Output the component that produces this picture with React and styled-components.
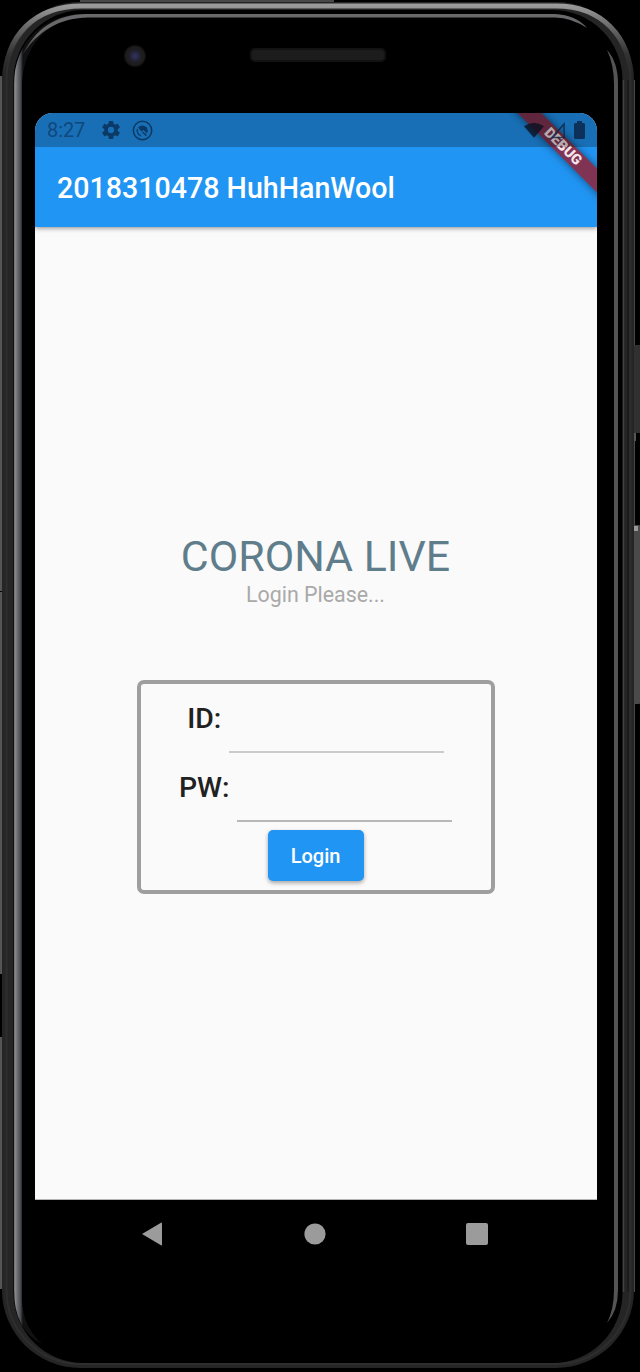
import React from 'react';
import styled, { createGlobalStyle } from 'styled-components';

const GlobalStyle = createGlobalStyle`
  * { box-sizing: border-box; }
  html, body { margin: 0; padding: 0; background: #000; }
  body { font-family: Roboto, "Noto Sans", sans-serif; overflow: hidden; }
`;

const Device = styled.div`
  position: relative;
  width: 640px;
  height: 1372px;
  padding: 0 43px 0 35px;
  display: flex;
  flex-direction: column;
  background: #000;
`;

const Frame = styled.svg`
  position: absolute;
  inset: 0;
  pointer-events: none;
`;

const Forehead = styled.div`
  position: relative;
  flex: none;
  height: 113px;
  display: flex;
  align-items: flex-start;
  padding: 45px 0 0 89px;
`;

const Camera = styled.div`
  width: 22px;
  height: 22px;
  border-radius: 50%;
  background: radial-gradient(circle, #34345c 0, #252542 4px, #1f1f24 6px, #1d1d1d 9px, #0c0c0c 11px);
`;

const Speaker = styled.div`
  width: 136px;
  height: 14px;
  margin: 3px 0 0 104px;
  border-radius: 5px;
  background: #1c1c1c;
  border: 2px solid #121212;
`;

const Screen = styled.main`
  position: relative;
  flex: none;
  height: 1087px;
  display: flex;
  flex-direction: column;
  background: #fafafa;
  border-radius: 18px 18px 0 0;
  border-bottom: 1px solid #b5b5b5;
  overflow: hidden;
`;

const StatusBar = styled.div`
  position: relative;
  z-index: 3;
  height: 34px;
  flex: none;
  display: flex;
  align-items: center;
  padding: 0 12px 0 12px;
  background: rgba(0, 0, 0, 0.25);
  color: #0c3a66;
`;

const Clock = styled.span`
  width: 55px;
  font-size: 20px;
  line-height: 34px;
  letter-spacing: -0.1px;
  color: #10477c;
`;

const StatusIcon = styled.svg`
  display: block;
  flex: none;
  margin-left: ${(p) => p.$gap || 0}px;
`;

const Spacer = styled.div`
  flex: 1;
`;

const AppBar = styled.header`
  position: relative;
  height: 114px;
  margin-top: -34px;
  flex: none;
  display: flex;
  align-items: center;
  padding: 36px 0 0 22px;
  background: #2195f3;
  box-shadow: 0 1px 5px rgba(0, 0, 0, 0.45);
`;

const Title = styled.h1`
  margin: 0;
  font-size: 28.6px;
  font-weight: 500;
  line-height: 34px;
  white-space: nowrap;
  color: #fff;
`;

const DebugRibbon = styled.div`
  position: absolute;
  z-index: 2;
  top: 24.5px;
  right: -30.5px;
  width: 130px;
  height: 17px;
  transform: rotate(45deg);
  background: rgba(142, 38, 60, 0.88);
  box-shadow: 0 0 8px rgba(0, 0, 0, 0.5);
  color: #f3e6ea;
  font-size: 14.4px;
  font-weight: 900;
  line-height: 17px;
  text-align: center;
`;

const Body = styled.section`
  flex: 1;
  display: flex;
  flex-direction: column;
  align-items: center;
  padding: 304px 1px 0 0;
`;

const Heading = styled.h2`
  margin: 0;
  font-size: 42.9px;
  font-weight: 400;
  line-height: 50px;
  white-space: nowrap;
  color: #607d8b;
`;

const Subtitle = styled.p`
  margin: 1px 0 0;
  font-size: 21.4px;
  line-height: 25px;
  color: #a9a9a9;
`;

const LoginCard = styled.form`
  width: 358px;
  height: 214px;
  margin-top: 73px;
  border: 4px solid #9e9e9e;
  border-radius: 7px;
  display: flex;
  flex-direction: column;
  align-items: center;
`;

const FieldRow = styled.label`
  height: 69px;
  flex: none;
  display: flex;
  align-items: center;
  gap: 7.5px;
`;

const FieldLabel = styled.span`
  font-size: 28.4px;
  font-weight: 500;
  line-height: 34px;
  color: #212121;
`;

const FieldInput = styled.input`
  width: 215px;
  height: 69px;
  padding: 0;
  border: 0;
  border-bottom: 2px solid ${(p) => p.$line};
  background: transparent;
  outline: none;
`;

const LoginButton = styled.button`
  width: 96px;
  height: 51px;
  margin-top: 8px;
  padding: 1px 0 0;
  border: 0;
  border-radius: 5px;
  background: #2195f3;
  box-shadow: 0 2px 4px rgba(0, 0, 0, 0.35);
  color: #fff;
  font: 500 20px/50px Roboto, sans-serif;
`;

const NavBar = styled.nav`
  position: relative;
  flex: none;
  height: 68px;
  display: flex;
  justify-content: space-between;
  align-items: center;
  padding: 0 109px 0 106px;
`;

function PhoneFrame() {
  return (
    <Frame width="640" height="1372" viewBox="0 0 640 1372" fill="none">
      <defs>
        <linearGradient id="topEdge" x1="0" y1="2" x2="0" y2="76" gradientUnits="userSpaceOnUse">
          <stop offset="0" stopColor="#a2a2a2" />
          <stop offset=".25" stopColor="#777" />
          <stop offset=".7" stopColor="#333" />
          <stop offset="1" stopColor="#2b2b2b" stopOpacity="0" />
        </linearGradient>
        <linearGradient id="leftRim" x1="13" y1="0" x2="23" y2="0" gradientUnits="userSpaceOnUse">
          <stop offset="0" stopColor="#333" />
          <stop offset=".2" stopColor="#8c8c8c" />
          <stop offset=".45" stopColor="#6c6c70" />
          <stop offset=".75" stopColor="#484a52" />
          <stop offset="1" stopColor="#111" />
        </linearGradient>
        <linearGradient id="topRim" x1="14" y1="0" x2="90" y2="0" gradientUnits="userSpaceOnUse">
          <stop offset="0" stopColor="#69696b" stopOpacity="0" />
          <stop offset=".3" stopColor="#69696b" />
        </linearGradient>
      </defs>
      <path d="M0 76h2v515H0zM0 592h2v382H0zM0 1037h2v252H0z" fill="#555" />
      <path d="M80 0h254v2H80z" fill="#48484a" />
      <path d="M634.5 80v1212" stroke="#48484a" />
      <rect x="634" y="345" width="6" height="88" fill="#303030" />
      <rect x="634" y="433" width="2" height="8" fill="#555" />
      <rect x="634" y="525" width="6" height="179" rx="1" fill="#4a4a4a" />
      <rect x="634" y="526" width="4" height="5" fill="#999" />
      <rect x="2" y="2" width="632" height="1366" rx="78" fill="#252525" />
      <rect x="6.5" y="6" width="624" height="1358" rx="74" stroke="#2e2e2e" strokeWidth="2" />
      <rect x="13.5" y="10" width="609" height="1353" rx="70" fill="#000" />
      <path d="M5 82C5 35 35 6 82 6H556C601 6 631 36 631 82" stroke="url(#topEdge)" strokeWidth="5" />
      <path d="M14 85C14 42 43 14 85 14L86 17.5C48 18 22 46 22 88V1300Q23 1327 42 1344Q14 1330 14 1290Z" fill="url(#leftRim)" />
      <path d="M22 56C34 30 56 14 86 14H555Q576 15 587 28Q572 18 555 17.500H88C60 18 38 30 22 56Z" fill="url(#topRim)" />
      <path d="M607 50Q618 62 618 84V1290Q618 1311 607 1323Q614 1309 614 1290V84Q614 65 607 50Z" fill="#545456" />
      <path d="M623.5 80V1292" stroke="#414141" strokeWidth="1.5" />
      <path d="M628 80V1292" stroke="#1c1c1c" strokeWidth="2" />
    </Frame>
  );
}

function SettingsIcon() {
  return (
    <StatusIcon width="18" height="18" viewBox="2 2 20 20" fill="currentColor">
      <path d="M19.43 12.98c.04-.32.07-.64.07-.98s-.03-.66-.07-.98l2.11-1.65a.5.5 0 0 0 .12-.64l-2-3.46a.5.5 0 0 0-.61-.22l-2.49 1a7.3 7.3 0 0 0-1.69-.98l-.38-2.65A.49.49 0 0 0 14 2h-4a.49.49 0 0 0-.49.42l-.38 2.65c-.61.25-1.17.59-1.69.98l-2.49-1a.49.49 0 0 0-.61.22l-2 3.46a.49.49 0 0 0 .12.64l2.11 1.65c-.04.32-.07.65-.07.98s.03.66.07.98l-2.11 1.65a.5.5 0 0 0-.12.64l2 3.46c.12.22.39.3.61.22l2.49-1c.52.4 1.08.73 1.69.98l.38 2.65c.03.24.24.42.49.42h4c.25 0 .46-.18.49-.42l.38-2.65a7.3 7.3 0 0 0 1.69-.98l2.49 1c.23.09.49 0 .61-.22l2-3.46a.5.5 0 0 0-.12-.64zM12 15.5a3.5 3.5 0 1 1 0-7 3.500 3.500 0 0 1 0 7z" />
    </StatusIcon>
  );
}

function SilencedIcon() {
  return (
    <StatusIcon $gap={12} width="21" height="21" viewBox="0 0 21 21" fill="none" stroke="currentColor">
      <circle cx="10.5" cy="10.5" r="9.2" strokeWidth="1.6" />
      <path d="M9 15.800A5.500 5.500 0 0 1 5.400 9" strokeWidth="1.3" />
      <path d="M6 7.500Q10 3.500 15 7.500Q16.500 10.500 15 13.500L11.500 10L9.500 11.500Z" fill="currentColor" stroke="none" />
      <path d="M10.500 12L14.500 15.600" strokeWidth="1.5" />
    </StatusIcon>
  );
}

export default function App() {
  return (
    <>
      <GlobalStyle />
      <Device>
        <PhoneFrame />
        <Forehead>
          <Camera />
          <Speaker />
        </Forehead>
        <Screen>
          <StatusBar>
            <Clock>8:27</Clock>
            <SettingsIcon />
            <SilencedIcon />
            <Spacer />
            <StatusIcon width="20" height="16" viewBox="0 0 22 17" fill="#0a1020" fillOpacity=".8">
              <path d="M0 4.500Q11-3.500 22 4.500L11 17Z" />
            </StatusIcon>
            <StatusIcon $gap={6} width="16" height="17" viewBox="0 0 17 18" fill="none" stroke="#0d2545" strokeOpacity=".8" strokeWidth="1.6">
              <path d="M2 16.500L15 2V16.500Z" />
            </StatusIcon>
            <StatusIcon $gap={8} width="11" height="18" viewBox="0 0 11 18" fill="#0c315a">
              <path d="M3 0h5v2h1.500Q11 2 11 3.500v13Q11 18 9.500 18h-8Q0 18 0 16.500v-13Q0 2 1.500 2H3z" />
            </StatusIcon>
          </StatusBar>
          <AppBar>
            <Title>2018310478 HuhHanWool</Title>
          </AppBar>
          <Body>
            <Heading>CORONA LIVE</Heading>
            <Subtitle>Login Please...</Subtitle>
            <LoginCard onSubmit={(e) => e.preventDefault()}>
              <FieldRow>
                <FieldLabel>ID:</FieldLabel>
                <FieldInput $line="#cbcbcb" />
              </FieldRow>
              <FieldRow>
                <FieldLabel>PW:</FieldLabel>
                <FieldInput type="password" $line="#b8b8b8" />
              </FieldRow>
              <LoginButton>Login</LoginButton>
            </LoginCard>
          </Body>
          <DebugRibbon>DEBUG</DebugRibbon>
        </Screen>
        <NavBar>
          <svg width="22" height="24" viewBox="0 0 22 24" fill="#9b9b9b">
            <path d="M1 12L20 .7Q21 .3 21 1.500V22.500Q21 23.700 20 23.300Z" />
          </svg>
          <svg width="22" height="22" viewBox="0 0 22 22" fill="#9b9b9b">
            <circle cx="11" cy="11" r="10.600" />
          </svg>
          <svg width="22" height="22" viewBox="0 0 22 22" fill="#9b9b9b">
            <rect width="22" height="22" rx="2" />
          </svg>
        </NavBar>
      </Device>
    </>
  );
}
